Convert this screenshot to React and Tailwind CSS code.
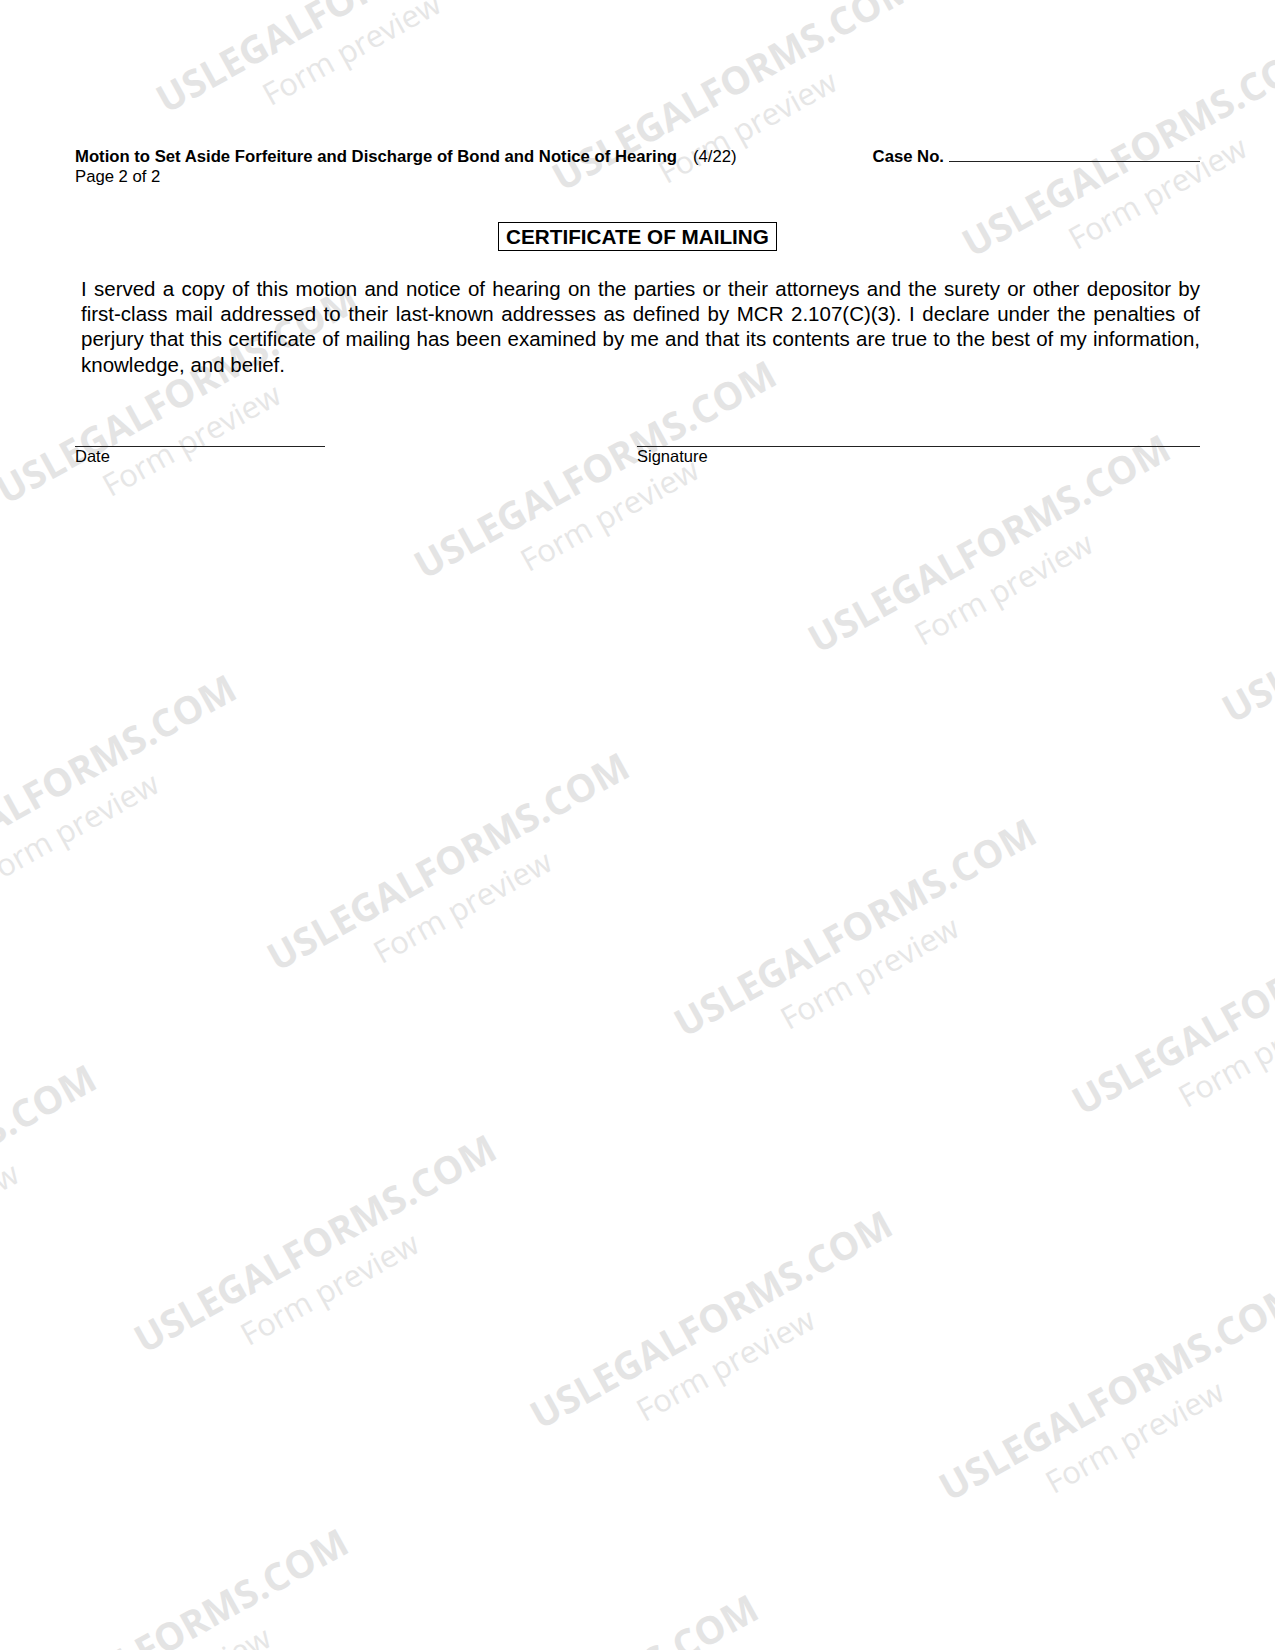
import React from 'react'

// watermark anchors: bottom-left of the "U" in page pixels
const marks = [
  [166, 114], [562, 192], [972, 258],
  [6, 505], [424, 580], [818, 654], [1232, 724],
  [-116, 894], [277, 972], [684, 1038], [1082, 1116],
  [-256, 1284], [144, 1354], [540, 1430], [949, 1502],
  [-4, 1748], [406, 1814],
]

const lines = [
  'I served a copy of this motion and notice of hearing on the parties or their attorneys and the surety or other depositor by',
  'first-class mail addressed to their last-known addresses as defined by MCR 2.107(C)(3). I declare under the penalties of',
  'perjury that this certificate of mailing has been examined by me and that its contents are true to the best of my information,',
]

function Watermark({ x, y }) {
  return (
    <div className="absolute h-0 w-0 origin-top-left -rotate-[29deg]" style={{ left: x, top: y }}>
      <div className="-mt-[34px] whitespace-nowrap font-['Open_Sans',sans-serif] text-[38px] font-bold leading-[38px] tracking-[0.3px] text-[#e4e4e4]">
        USLEGALFORMS.COM
      </div>
      <div className="ml-[95px] mt-[13px] whitespace-nowrap font-['Open_Sans',sans-serif] text-[31px] leading-[31px] text-[#e6e6e6]">
        Form preview
      </div>
    </div>
  )
}

export default function App() {
  return (
    <div className="relative h-[1650px] w-[1275px] overflow-hidden bg-white font-['Liberation_Sans',Arial,sans-serif] text-black">
      {/* watermark layer */}
      <div className="pointer-events-none absolute inset-0 select-none">
        {marks.map(([x, y], i) => (
          <Watermark key={i} x={x} y={y} />
        ))}
      </div>

      <div className="relative z-10 px-[75px] pt-[147px]">
        {/* header */}
        <div className="flex items-start text-[16.7px] leading-[20px]">
          <div>
            <div className="flex">
              <span className="font-bold">
                Motion to Set Aside Forfeiture and Discharge of Bond and Notice of Hearing
              </span>
              <span className="ml-[16px]">(4/22)</span>
            </div>
            <div>Page 2 of 2</div>
          </div>
          <div className="ml-auto flex items-baseline">
            <span className="font-bold">Case No.</span>
            <span className="ml-[5px] h-0 w-[251px] border-b-[1.5px] border-[#222]" />
          </div>
        </div>

        {/* title box */}
        <div className="mx-auto mt-[35px] w-fit border-[1.5px] border-black px-[7px] text-[20.7px] font-bold leading-[27px]">
          CERTIFICATE OF MAILING
        </div>

        {/* certificate text */}
        <div className="mt-[25px] pl-[6px] text-[20.5px] leading-[25.2px]">
          {lines.map((t) => (
            <div key={t} className="text-justify [text-align-last:justify]">
              {t}
            </div>
          ))}
          <div>knowledge, and belief.</div>
        </div>

        {/* signature row */}
        <div className="mt-[69px] flex text-[16.5px] leading-[19px]">
          <div className="w-[250px]">
            <div className="border-t-[1.5px] border-[#222]" />
            <div>Date</div>
          </div>
          <div className="ml-auto w-[563px]">
            <div className="border-t-[1.5px] border-[#222]" />
            <div>Signature</div>
          </div>
        </div>
      </div>
    </div>
  )
}
